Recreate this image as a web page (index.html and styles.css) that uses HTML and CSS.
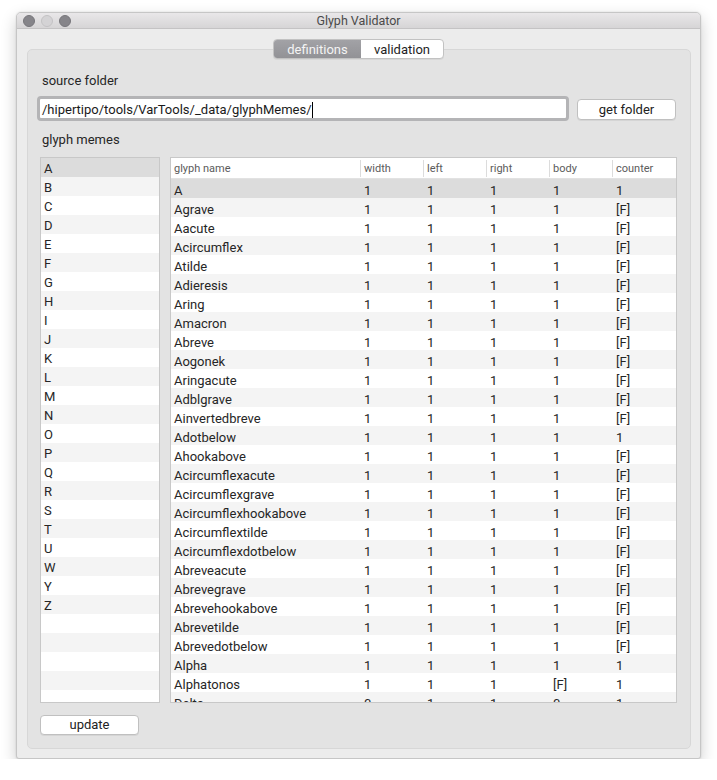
FILE: index.html
```html
<!DOCTYPE html>
<html>
<head>
<meta charset="utf-8">
<title>Glyph Validator</title>
<link rel="stylesheet" href="styles.css">
</head>
<body>
<div class="window">
  <div class="titlebar">
    <div class="lights">
      <span class="light dark"></span>
      <span class="light pale"></span>
      <span class="light dark"></span>
    </div>
    <div class="title">Glyph Validator</div>
  </div>
  <div class="content">
    <div class="tabs">
      <span class="seg active">definitions</span>
      <span class="seg">validation</span>
    </div>
    <div class="panel">
      <div class="label first">source folder</div>
      <div class="folder-row">
        <div class="field">/hipertipo/tools/VarTools/_data/glyphMemes/<span class="caret"></span></div>
        <button class="btn get">get folder</button>
      </div>
      <div class="label second">glyph memes</div>
      <div class="main">
        <div class="list" id="list"></div>
        <div class="table">
          <div class="thead">
            <span>glyph name</span><span>width</span><span>left</span><span>right</span><span>body</span><span>counter</span>
          </div>
          <div class="tbody" id="tbody"></div>
        </div>
      </div>
      <button class="btn update">update</button>
    </div>
  </div>
</div>
<script src="app.js"></script>
</body>
</html>
```

FILE: app.js
```js
var letters = ["A","B","C","D","E","F","G","H","I","J","K","L","M","N","O","P","Q","R","S","T","U","W","Y","Z"];
var list = document.getElementById("list");
for (var i = 0; i < 29; i++) {
  var d = document.createElement("div");
  d.className = "lrow" + (i === 0 ? " sel" : (i % 2 ? " alt" : ""));
  d.textContent = letters[i] || "";
  list.appendChild(d);
}
var F = "[F]";
var rows = [
  ["A",1,1,1,1,1],["Agrave",1,1,1,1,F],["Aacute",1,1,1,1,F],["Acircumflex",1,1,1,1,F],
  ["Atilde",1,1,1,1,F],["Adieresis",1,1,1,1,F],["Aring",1,1,1,1,F],["Amacron",1,1,1,1,F],
  ["Abreve",1,1,1,1,F],["Aogonek",1,1,1,1,F],["Aringacute",1,1,1,1,F],["Adblgrave",1,1,1,1,F],
  ["Ainvertedbreve",1,1,1,1,F],["Adotbelow",1,1,1,1,1],["Ahookabove",1,1,1,1,F],
  ["Acircumflexacute",1,1,1,1,F],["Acircumflexgrave",1,1,1,1,F],["Acircumflexhookabove",1,1,1,1,F],
  ["Acircumflextilde",1,1,1,1,F],["Acircumflexdotbelow",1,1,1,1,F],["Abreveacute",1,1,1,1,F],
  ["Abrevegrave",1,1,1,1,F],["Abrevehookabove",1,1,1,1,F],["Abrevetilde",1,1,1,1,F],
  ["Abrevedotbelow",1,1,1,1,F],["Alpha",1,1,1,1,1],["Alphatonos",1,1,1,F,1],["Delta",0,1,1,0,1]
];
var tb = document.getElementById("tbody");
rows.forEach(function (r, i) {
  var d = document.createElement("div");
  d.className = "trow" + (i === 0 ? " sel" : (i % 2 ? " alt" : ""));
  r.forEach(function (c) {
    var s = document.createElement("span");
    s.textContent = c;
    d.appendChild(s);
  });
  tb.appendChild(d);
});
```

FILE: styles.css
```css
* { box-sizing: border-box; }
html, body { margin: 0; padding: 0; background: #ffffff; }
body {
  font-family: Roboto, "Liberation Sans", sans-serif;
  font-size: 13px;
  color: #262626;
}
.window {
  margin: 12px 0 0 16px;
  width: 685px;
  height: 747px;
  background: #ececec;
  border: 1px solid #c6c6c6;
  border-radius: 5px 5px 3px 3px;
  box-shadow: 0 6px 16px rgba(0,0,0,0.2), 0 0 2px rgba(0,0,0,0.12);
  display: flex;
  flex-direction: column;
  overflow: hidden;
}
.titlebar {
  height: 16px;
  background: linear-gradient(#e9e7e9, #d6d5d6);
  border-bottom: 1px solid #c4c3c4;
  display: flex;
  align-items: center;
  position: relative;
  flex: none;
}
.lights { display: flex; gap: 6px; padding-left: 6px; }
.light {
  width: 12px; height: 12px; border-radius: 50%;
  display: block;
}
.light.dark { background: #86858a; border: 1px solid #77767b; }
.light.pale { background: #d4d3d5; border: 1px solid #c3c2c4; }
.title {
  position: absolute; left: 0; right: 0; top: 0; bottom: 0;
  text-align: center;
  font-size: 12.5px;
  line-height: 16px;
  color: #4a4a4a;
}
.content {
  flex: 1;
  display: flex;
  flex-direction: column;
  padding: 10px 9px 9px 10px;
}
.tabs {
  align-self: flex-start;
  margin-left: 246px;
  display: flex;
  height: 20px;
  border-radius: 4px;
  border: 1px solid #c2c2c2;
  background: #fff;
  overflow: hidden;
  position: relative;
  z-index: 1;
  box-shadow: 0 1px 0 rgba(0,0,0,0.05);
}
.seg {
  display: flex; align-items: center; justify-content: center;
  font-size: 13px;
  color: #1e1e1e;
  padding-top: 1px;
}
.seg.active {
  width: 87px;
  background: linear-gradient(#a2a2a6, #929296);
  color: #f4f4f4;
}
.seg:last-child { width: 82px; }
.panel {
  flex: 1;
  margin-top: -10px;
  background: #e3e3e3;
  border: 1px solid #d7d7d7;
  border-radius: 5px;
  display: flex;
  flex-direction: column;
}
.label { line-height: 18px; padding-left: 14px; }
.label.first { margin-top: 22px; }
.label.second { margin-top: 10px; }
.folder-row {
  margin-top: 6px;
  display: flex;
  align-items: flex-start;
  padding-left: 9px;
}
.field {
  width: 532px;
  height: 25px;
  background: #fff;
  border: 3px solid #b4b4b6;
  border-radius: 4px;
  padding-left: 2px;
  line-height: 21px;
  white-space: nowrap;
  color: #1a1a1a;
}
.caret {
  display: inline-block;
  width: 1px; height: 16px;
  background: #000;
  vertical-align: -4px;
}
.btn {
  font: inherit;
  font-size: 13px;
  color: #222;
  background: #fff;
  border: 1px solid #c0c0c0;
  border-radius: 4px;
  box-shadow: 0 1px 0 rgba(0,0,0,0.06);
  padding: 1px 0 0;
  height: 21px;
  width: 99px;
  line-height: 18px;
}
.btn.get { margin-left: 8px; margin-top: 3px; }
.main {
  margin-top: 8px;
  margin-left: 12px;
  display: flex;
  gap: 10px;
  height: 546px;
}
.list {
  width: 120px;
  border: 1px solid #c8c8c8;
  background: #fff;
  overflow: hidden;
}
.lrow {
  height: 19px;
  line-height: 21px;
  padding-left: 3px;
  background: #fff;
}
.lrow.alt { background: #f4f4f4; }
.lrow.sel { background: #dcdcdc; }
.table {
  width: 507px;
  border: 1px solid #c8c8c8;
  background: #fff;
  overflow: hidden;
}
.thead, .trow {
  display: grid;
  grid-template-columns: 189px 63px 63px 63px 63px 64px;
}
.thead {
  height: 21px;
  border-bottom: 1px solid #e2e2e2;
  font-size: 11px;
  color: #5b5b5b;
  align-items: center;
}
.thead span { padding-left: 3px; height: 17px; line-height: 17px; }
.thead span + span { border-left: 1px solid #dcdcdc; }
.trow {
  height: 19px;
  line-height: 23px;
  background: #fff;
}
.trow.alt { background: #f4f4f4; }
.trow.sel { background: #dcdcdc; }
.trow span { padding-left: 3px; white-space: nowrap; height: 19px; overflow: visible; }
.trow span + span { padding-left: 4px; }
.update {
  margin-top: 12px;
  margin-left: 12px;
  height: 20px;
  padding-top: 0;
}
```
